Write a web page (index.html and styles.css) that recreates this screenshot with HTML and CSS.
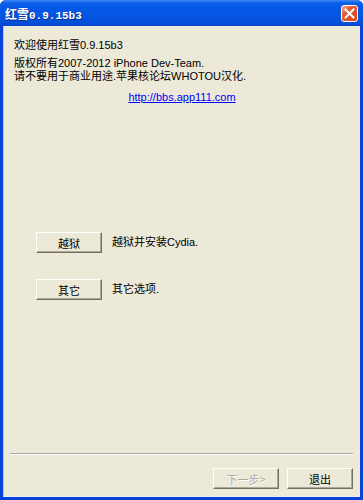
FILE: index.html
```html
<!DOCTYPE html>
<html>
<head>
<meta charset="utf-8">
<link rel="stylesheet" href="styles.css">
</head>
<body>
<div class="window">
  <div class="titlebar">
    <span class="title"><span class="title-cjk">红雪</span><span class="title-ver">0.9.15b3</span></span>
    <span class="close" aria-label="关闭">
      <svg width="11" height="11" viewBox="0 0 11 11"><path d="M1.5 1.5 L9.5 9.5 M9.5 1.5 L1.5 9.5" stroke="#fff" stroke-width="2" stroke-linecap="square"/></svg>
    </span>
  </div>
  <div class="client">
    <div class="content">
      <p class="welcome">欢迎使用红雪0.9.15b3</p>
      <p class="copy">版权所有2007-2012 iPhone Dev-Team.<br>请不要用于商业用途.苹果核论坛WHOTOU汉化.</p>
      <p class="linkrow"><a class="link" href="#">http://bbs.app111.com</a></p>
      <div class="options">
        <div class="option">
          <span class="btn">越狱</span>
          <span class="opt-label">越狱并安装Cydia.</span>
        </div>
        <div class="option">
          <span class="btn">其它</span>
          <span class="opt-label">其它选项.</span>
        </div>
      </div>
    </div>
    <div class="footer">
      <div class="separator"></div>
      <div class="actions">
        <span class="btn disabled">下一步&gt;</span>
        <span class="btn">退出</span>
      </div>
    </div>
  </div>
</div>
</body>
</html>
```

FILE: styles.css
```css
html, body {
  margin: 0;
  padding: 0;
  background: #fff;
}
.window {
  width: 363px;
  height: 500px;
  box-sizing: border-box;
  display: flex;
  flex-direction: column;
  background: #0842d8;
  border-radius: 6px 6px 0 0;
  overflow: hidden;
  font-family: "Liberation Sans", "Noto Sans CJK SC", sans-serif;
  font-size: 11px;
  color: #000;
}
.titlebar {
  height: 26px;
  flex: none;
  display: flex;
  align-items: center;
  justify-content: space-between;
  padding: 0 5px 0 5px;
  background: linear-gradient(to bottom, #3d8cf7 0px, #0a5ee6 3px, #0558e6 8px, #0454e0 18px, #0250d8 23px, #0843c8 26px);
}
.title {
  color: #fff;
  font-weight: bold;
  font-size: 12px;
  text-shadow: 1px 1px 0 #0a2c8c;
  display: flex;
  align-items: baseline;
  margin-top: 1px;
}
.title-cjk {
  font-family: "Noto Sans CJK SC", sans-serif;
  font-size: 12px;
}
.title-ver {
  font-family: "Liberation Mono", monospace;
  font-size: 11px;
}
.close {
  width: 17px;
  height: 17px;
  box-sizing: border-box;
  border: 1px solid #fff;
  border-radius: 3px;
  background: linear-gradient(135deg, #f4a88c 0%, #e65a30 35%, #d4441c 100%);
  display: flex;
  align-items: center;
  justify-content: center;
  margin-top: 1px;
}
.client {
  flex: 1;
  margin: 0 3px 3px 3px;
  background: #ece9d8;
  border-left: 1px solid #b4c8f0;
  border-bottom: 1px solid #e8eefa;
  display: flex;
  flex-direction: column;
}
.content {
  flex: 1;
  padding: 13px 0 0 10px;
}
p {
  margin: 0;
  line-height: 13px;
}
.welcome {
  margin-bottom: 5px;
}
.copy {
  margin-bottom: 8px;
}
.linkrow {
  text-align: center;
  padding-right: 10px;
}
.link {
  color: #0000ff;
  text-decoration: underline;
}
.options {
  margin-top: 128px;
  padding-left: 22px;
  display: flex;
  flex-direction: column;
  gap: 26px;
}
.option {
  display: flex;
  align-items: center;
  gap: 10px;
}
.btn {
  width: 66px;
  height: 21px;
  box-sizing: border-box;
  display: flex;
  align-items: center;
  justify-content: center;
  font-family: "Noto Sans CJK SC", sans-serif;
  font-size: 11px;
  background: #ece9d8;
  border-top: 1px solid #fff;
  border-left: 1px solid #fff;
  border-right: 1px solid #716f64;
  border-bottom: 1px solid #716f64;
  box-shadow: inset -1px -1px 0 #aca899;
}
.opt-label {
  margin-top: -4px;
}
.btn.disabled {
  color: #aca899;
  text-shadow: 1px 1px 0 #fff;
}
.footer {
  flex: none;
  padding: 0 7px 7px 6px;
}
.separator {
  height: 0;
  border-top: 1px solid #aca899;
  border-bottom: 1px solid #fff;
  margin-bottom: 13px;
}
.actions {
  display: flex;
  justify-content: flex-end;
  gap: 8px;
}
```
